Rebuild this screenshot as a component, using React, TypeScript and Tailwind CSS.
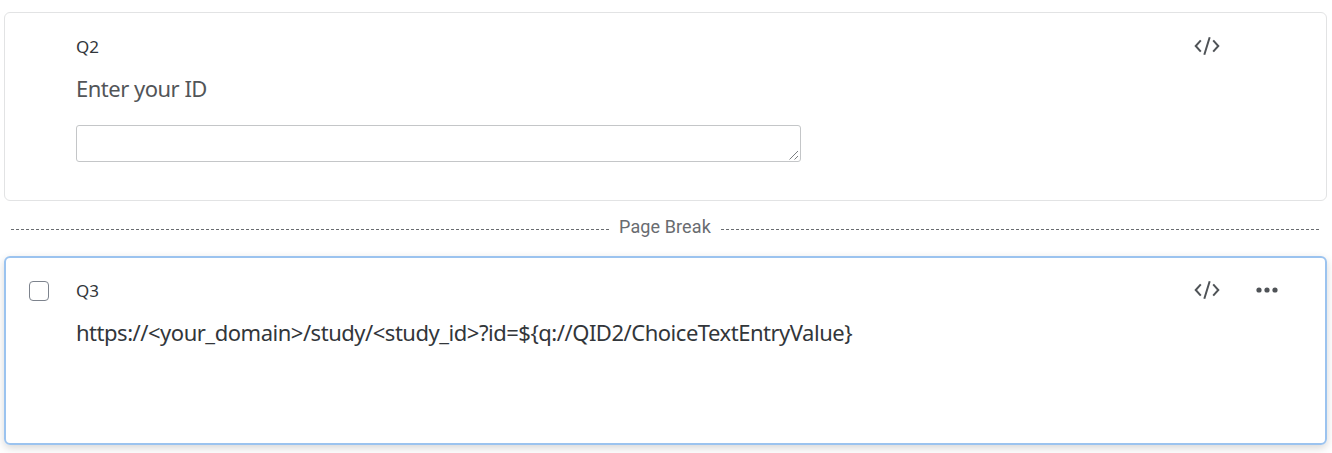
import React from "react";

function CodeIcon() {
  return (
    <svg width="26" height="20" viewBox="0 0 26 20" fill="none" stroke="#4f5357" strokeWidth="2">
      <path d="M6.8 4.3 1.7 10l5.1 5.7M19.2 4.3l5.1 5.7-5.1 5.7M15.7 1.2 10.3 18.8" />
    </svg>
  );
}

function MoreIcon() {
  return (
    <svg width="22" height="20" viewBox="0 0 22 20" fill="#4f5357">
      <circle cx="3" cy="10" r="2.6" />
      <circle cx="11" cy="10" r="2.6" />
      <circle cx="19" cy="10" r="2.6" />
    </svg>
  );
}

export default function App() {
  return (
    <main className="h-[453px] w-[1332px] overflow-hidden bg-white px-1 pt-3 font-['Noto_Sans',sans-serif] text-[#32363a]">
      <section className="flex h-[189px] w-[1323px] rounded-md border border-[#e2e3e4] pl-[71px]">
        <div className="w-[1118px] pt-6">
          <div className="text-[17px] leading-5">Q2</div>
          <div className="mt-[17px] text-[22px] leading-7 tracking-[-0.5px] text-[#525558]">Enter your ID</div>
          <div className="mt-[23px] flex h-[37px] w-[725px] items-end justify-end rounded-[3px] border border-[#c4c6c8]">
            <svg width="12" height="12" viewBox="0 0 12 12" stroke="#7b7e81"><path d="M1.5 10.5 10 2M6.5 10.5 10 7" /></svg>
          </div>
        </div>
        <div className="pt-[23px]"><CodeIcon /></div>
      </section>
      <div className="flex h-[55px] w-[1323px] items-center pl-[7px] pr-2">
        <div className="mt-0.5 h-px w-[598px] bg-[repeating-linear-gradient(90deg,#696c70_0_3px,transparent_3px_5px)]" />
        <div className="mb-1 w-[112px] text-center font-['Roboto',sans-serif] text-[18px] leading-5 tracking-[0.1px] text-[#696c70]">Page Break</div>
        <div className="mt-0.5 h-px flex-1 bg-[repeating-linear-gradient(90deg,#696c70_0_3px,transparent_3px_5px)]" />
      </div>
      <section className="flex h-[189px] w-[1323px] rounded-md border-2 border-[#9bc3ef] pl-[23px] shadow-[0_3px_9px_rgba(0,0,0,0.16)]">
        <div className="mt-[23px] size-5 rounded border border-[#7d838d]" />
        <div className="ml-[27px] w-[1118px] pt-[23px]">
          <div className="text-[17px] leading-5">Q3</div>
          <div className="mt-[17px] text-[22px] leading-7 tracking-[-0.48px]">{"https://<your_domain>/study/<study_id>?id=${q://QID2/ChoiceTextEntryValue}"}</div>
        </div>
        <div className="flex gap-9 pt-[22px]"><CodeIcon /><MoreIcon /></div>
      </section>
    </main>
  );
}
